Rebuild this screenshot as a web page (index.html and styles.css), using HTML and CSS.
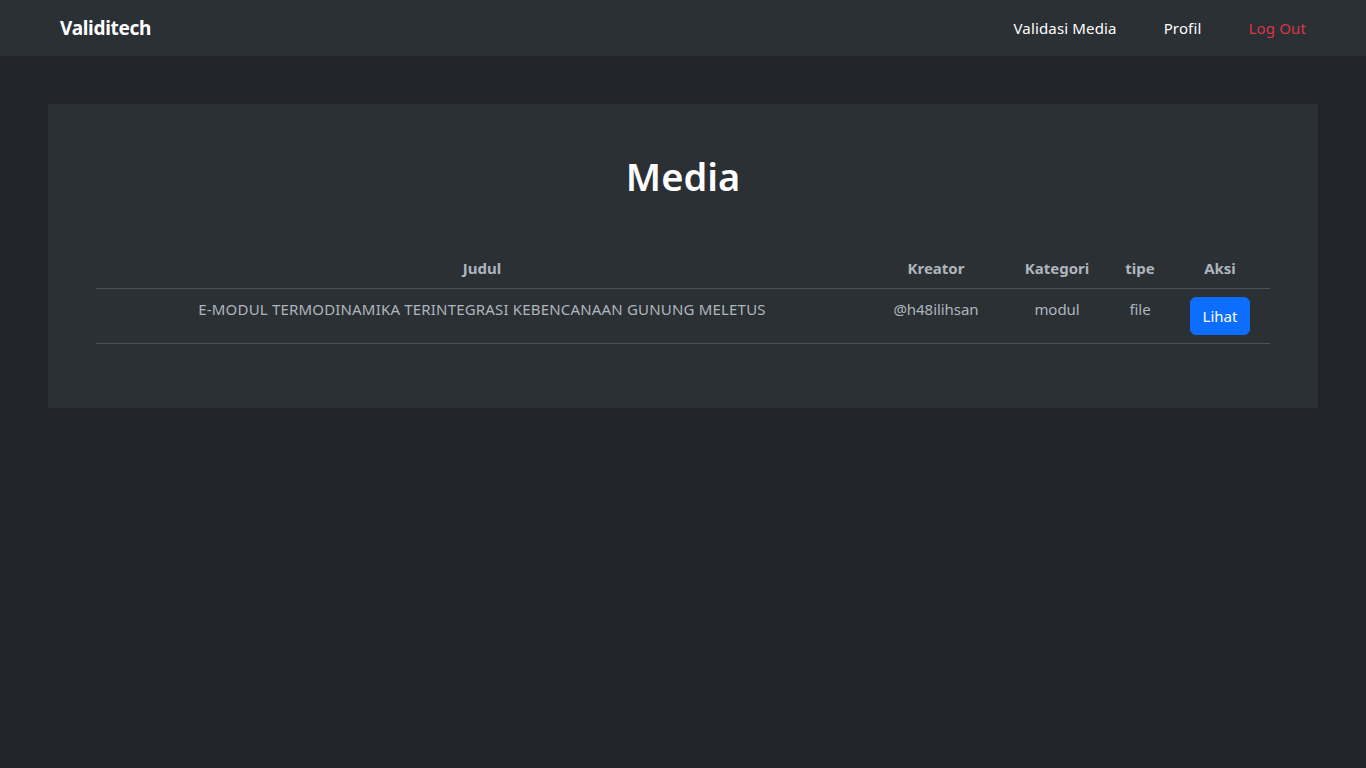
FILE: index.html
```html
<!DOCTYPE html>
<html lang="id">
<head>
<meta charset="utf-8">
<title>Validitech</title>
<link rel="stylesheet" href="styles.css">
</head>
<body>
<nav class="navbar">
  <a class="brand" href="#">Validitech</a>
  <ul class="nav-links">
    <li><a href="#">Validasi Media</a></li>
    <li><a href="#">Profil</a></li>
    <li><a href="#" class="logout">Log Out</a></li>
  </ul>
</nav>
<main class="container">
  <section class="card">
    <h1 class="title">Media</h1>
    <table class="media-table">
      <colgroup>
        <col class="c-judul">
        <col class="c-kreator">
        <col class="c-kategori">
        <col class="c-tipe">
        <col class="c-aksi">
      </colgroup>
      <thead>
        <tr>
          <th>Judul</th>
          <th>Kreator</th>
          <th>Kategori</th>
          <th>tipe</th>
          <th>Aksi</th>
        </tr>
      </thead>
      <tbody>
        <tr>
          <td class="judul">E-MODUL TERMODINAMIKA TERINTEGRASI KEBENCANAAN GUNUNG MELETUS</td>
          <td>@h48ilihsan</td>
          <td>modul</td>
          <td>file</td>
          <td><a class="btn" href="#">Lihat</a></td>
        </tr>
      </tbody>
    </table>
  </section>
</main>
</body>
</html>
```
FILE: styles.css
```css
* { box-sizing: border-box; }
html, body {
  margin: 0;
  padding: 0;
  background: #212529;
  color: #dee2e6;
  font-family: "Noto Sans", "Open Sans", sans-serif;
  font-size: 16px;
  line-height: 1.5;
}
a { text-decoration: none; }
.navbar {
  height: 56px;
  background: #2b3035;
  display: flex;
  align-items: center;
  justify-content: space-between;
  padding: 0 60px;
}
.brand {
  color: #fff;
  font-weight: 700;
  font-size: 19px;
  letter-spacing: -0.3px;
}
.nav-links {
  list-style: none;
  display: flex;
  gap: 47px;
  margin: 0;
  padding: 0;
}
.nav-links a {
  color: #fff;
  font-size: 15px;
  letter-spacing: 0.15px;
}
.nav-links a.logout { color: #dc3545; }
.container {
  padding: 48px 48px;
}
.card {
  background: #2b3035;
  padding: 48px;
}
.title {
  margin: 0 0 48px;
  text-align: center;
  color: #fff;
  font-size: 38px;
  font-weight: 600;
  line-height: 48px;
}
.media-table {
  width: 100%;
  border-collapse: collapse;
  table-layout: fixed;
  margin-bottom: 16px;
  color: #adb5bd;
}
.c-judul { width: 772px; }
.c-kreator { width: 136px; }
.c-kategori { width: 106px; }
.c-tipe { width: 60px; }
.c-aksi { width: 100px; }
.media-table th,
.media-table td {
  text-align: center;
  vertical-align: top;
  padding: 8px;
  border-bottom: 1px solid #495057;
  font-size: 15px;
  line-height: 24px;
}
.media-table th { font-weight: 700; }
.media-table td { letter-spacing: -0.05px; }
.media-table td.judul { letter-spacing: 0.18px; }
.btn {
  display: inline-block;
  background: #0d6efd;
  border: 1px solid #0d6efd;
  color: #fff;
  padding: 6px 12px;
  border-radius: 6px;
  font-size: 15px;
  line-height: 24px;
  letter-spacing: 0;
}
```
